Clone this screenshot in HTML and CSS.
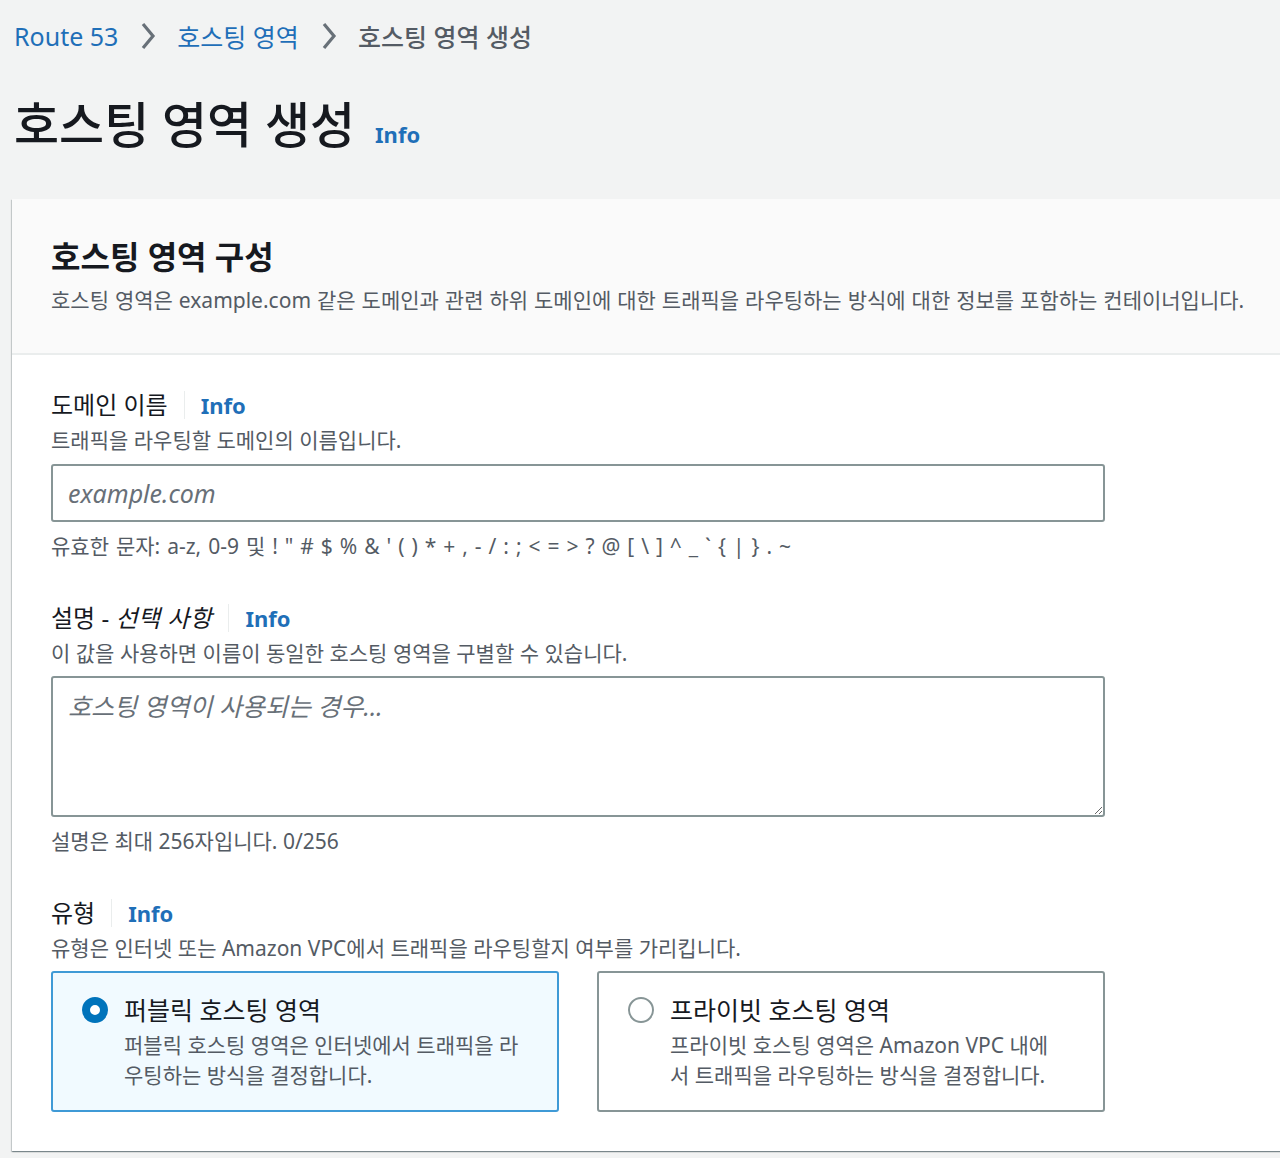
FILE: index.html
```html
<!DOCTYPE html>
<html lang="ko">
<head>
<meta charset="utf-8">
<title>호스팅 영역 생성</title>
<link rel="stylesheet" href="styles.css">
</head>
<body>
<nav class="breadcrumbs">
  <a class="crumb-link" href="#">Route 53</a>
  <svg class="chev" viewBox="0 0 16 30" width="16" height="30"><polyline points="3,3 13,15 3,27" fill="none" stroke="#687078" stroke-width="3.2" stroke-linejoin="miter"/></svg>
  <a class="crumb-link" href="#">호스팅 영역</a>
  <svg class="chev" viewBox="0 0 16 30" width="16" height="30"><polyline points="3,3 13,15 3,27" fill="none" stroke="#687078" stroke-width="3.2" stroke-linejoin="miter"/></svg>
  <span class="crumb-current">호스팅 영역 생성</span>
</nav>

<header class="page-header">
  <h1 class="page-title">호스팅 영역 생성</h1>
  <a class="info info-title" href="#">Info</a>
</header>

<section class="card">
  <div class="card-header">
    <h2 class="card-title">호스팅 영역 구성</h2>
    <p class="card-desc">호스팅 영역은 example.com 같은 도메인과 관련 하위 도메인에 대한 트래픽을 라우팅하는 방식에 대한 정보를 포함하는 컨테이너입니다.</p>
  </div>
  <div class="card-body">
    <div class="field">
      <div class="label-row">
        <span class="label">도메인 이름</span>
        <span class="divider"></span>
        <a class="info" href="#">Info</a>
      </div>
      <p class="desc">트래픽을 라우팅할 도메인의 이름입니다.</p>
      <input class="text-input" type="text" placeholder="example.com">
      <p class="hint hint-chars">유효한 문자: a-z, 0-9 및 ! " # $ % &amp; ' ( ) * + , - / : ; &lt; = &gt; ? @ [ \ ] ^ _ ` { | } . ~</p>
    </div>

    <div class="field">
      <div class="label-row">
        <span class="label">설명 - <em class="opt">선택 사항</em></span>
        <span class="divider"></span>
        <a class="info" href="#">Info</a>
      </div>
      <p class="desc">이 값을 사용하면 이름이 동일한 호스팅 영역을 구별할 수 있습니다.</p>
      <textarea class="text-area" placeholder="호스팅 영역이 사용되는 경우..."></textarea>
      <p class="hint">설명은 최대 256자입니다. 0/256</p>
    </div>

    <div class="field">
      <div class="label-row">
        <span class="label">유형</span>
        <span class="divider"></span>
        <a class="info" href="#">Info</a>
      </div>
      <p class="desc">유형은 인터넷 또는 Amazon VPC에서 트래픽을 라우팅할지 여부를 가리킵니다.</p>
      <div class="tiles">
        <div class="tile tile-selected">
          <span class="radio radio-on"></span>
          <div class="tile-text">
            <div class="tile-label">퍼블릭 호스팅 영역</div>
            <div class="tile-desc">퍼블릭 호스팅 영역은 인터넷에서 트래픽을 라우팅하는 방식을 결정합니다.</div>
          </div>
        </div>
        <div class="tile">
          <span class="radio"></span>
          <div class="tile-text">
            <div class="tile-label">프라이빗 호스팅 영역</div>
            <div class="tile-desc">프라이빗 호스팅 영역은 Amazon VPC 내에서 트래픽을 라우팅하는 방식을 결정합니다.</div>
          </div>
        </div>
      </div>
    </div>
  </div>
</section>
</body>
</html>
```

FILE: styles.css
```css
* { box-sizing: border-box; }

html, body {
  margin: 0;
  padding: 0;
  overflow: hidden;
}

body {
  background: #f2f3f3;
  font-family: "Noto Sans", "Noto Sans CJK KR", sans-serif;
  color: #16191f;
  width: 1280px;
  height: 1158px;
}

.breadcrumbs {
  display: flex;
  align-items: center;
  height: 71px;
  padding-left: 14px;
  font-size: 25px;
}

.crumb-link {
  color: #1f6fb8;
  text-decoration: none;
}

.chev {
  margin: 0 21px 0 22px;
  display: block;
}

.crumb-current {
  color: #545b64;
  font-weight: 500;
}

.page-header {
  display: flex;
  align-items: baseline;
  padding-left: 14px;
  height: 128px;
  padding-top: 20px;
}

.page-title {
  margin: 0;
  font-size: 49px;
  font-weight: 500;
  line-height: 66px;
}

.info {
  color: #1f6fb8;
  font-weight: 700;
  text-decoration: none;
  font-size: 22px;
}

.info-title {
  margin-left: 20px;
}

.card {
  margin-left: 12px;
  width: 1290px;
  background: #fff;
  box-shadow: 0 1px 1px 0 rgba(0, 28, 36, 0.3), 1px 1px 1px 0 rgba(0, 28, 36, 0.15), -1px 1px 1px 0 rgba(0, 28, 36, 0.15);
}

.card-header {
  background: #fafafa;
  border-bottom: 2px solid #eaeded;
  padding: 36px 39px 37px;
}

.card-title {
  margin: 0;
  font-size: 32px;
  font-weight: 700;
  line-height: 44px;
}

.card-desc {
  margin: 5px 0 0;
  font-size: 21px;
  line-height: 32px;
  color: #545b64;
  word-spacing: 0.5px;
}

.card-body {
  padding: 33px 39px 39px;
  width: 1132px;
}

.field + .field {
  margin-top: 39px;
}

.label-row {
  display: flex;
  align-items: center;
  height: 34px;
}

.label {
  font-size: 24px;
  line-height: 34px;
}

.opt {
  font-style: italic;
  letter-spacing: 0.5px;
}

.divider {
  width: 1px;
  height: 28px;
  background: #eaeded;
  margin: 0 16px 0 16px;
}

.desc {
  margin: 2px 0 0;
  font-size: 21px;
  line-height: 32px;
  color: #545b64;
}

.hint {
  margin: 8px 0 0;
  font-size: 21px;
  line-height: 32px;
  color: #545b64;
}

.hint-chars {
  word-spacing: 1.5px;
}

.text-input,
.text-area {
  display: block;
  width: 100%;
  border: 2px solid #879596;
  border-radius: 3px;
  background: #fff;
  font-family: inherit;
  font-size: 25px;
  color: #16191f;
  outline: none;
}

.text-input {
  margin-top: 8px;
  height: 58px;
  padding: 0 15px;
}

.text-area {
  margin-top: 7px;
  height: 141px;
  padding: 10px 15px;
  line-height: 36px;
  resize: vertical;
}

.text-input::placeholder,
.text-area::placeholder {
  color: #687078;
  font-style: italic;
}

.tiles {
  display: grid;
  grid-template-columns: 508px 508px;
  column-gap: 38px;
  margin-top: 7px;
}

.tile {
  display: flex;
  align-items: flex-start;
  height: 141px;
  border: 2px solid #879596;
  border-radius: 3px;
  padding: 22px 0 0 29px;
  background: #fff;
}

.tile-selected {
  background: #f1faff;
  border-color: #3f9ad6;
}

.radio {
  flex: none;
  width: 26px;
  height: 26px;
  border-radius: 50%;
  border: 2px solid #879596;
  margin-top: 2px;
  margin-right: 16px;
  background: #fff;
}

.radio-on {
  border: 8px solid #0073bb;
  background: #fff;
}

.tile-text {
  width: 395px;
}

.tile-label {
  font-size: 25px;
  line-height: 30px;
}

.tile-desc {
  margin-top: 5px;
  font-size: 21px;
  line-height: 30px;
  color: #545b64;
  word-break: break-all;
}
```
